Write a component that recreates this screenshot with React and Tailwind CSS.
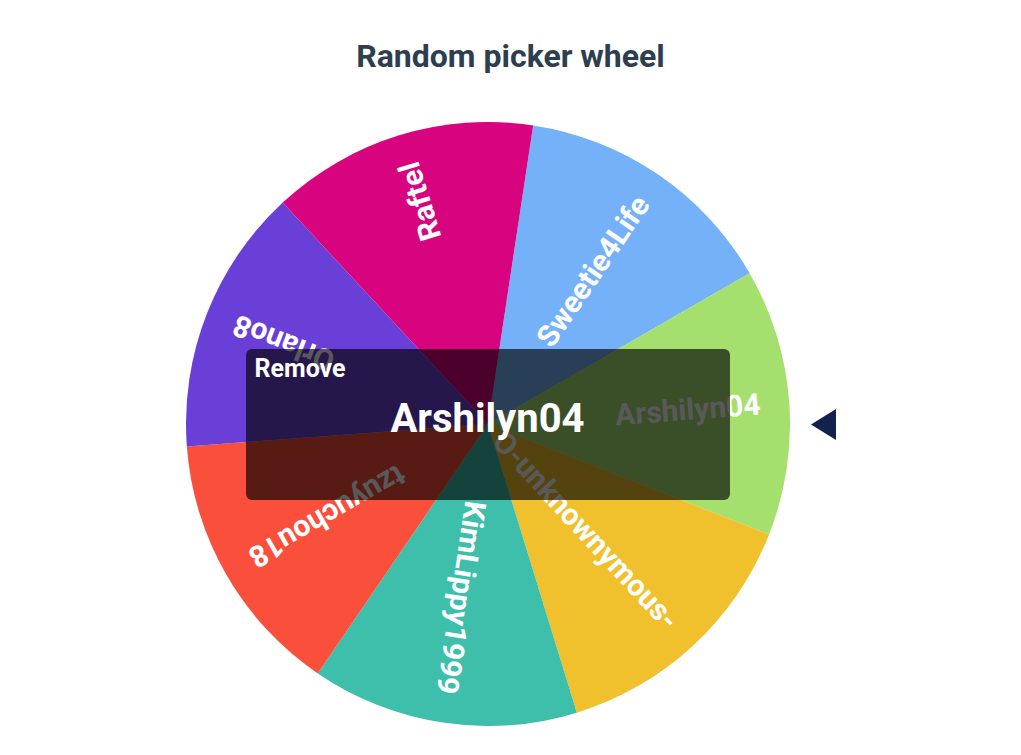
const slices = [
  { name: 'Sweetie4Life', color: '#75b1f8' },
  { name: 'Arshilyn04', color: '#a5e06f' },
  { name: 'O-unknownymous-', color: '#f0c02d' },
  { name: 'KimLippy1999', color: '#3dbfab' },
  { name: 'tzuyuchou18', color: '#f94f3b' },
  { name: 'Orlano8', color: '#6a3fd7' },
  { name: 'Raftel', color: '#d8047f' },
];

const SIZE = 604;
const C = SIZE / 2;
const START = 8.6;

function point(deg, r) {
  const a = (deg * Math.PI) / 180;
  return [C + r * Math.sin(a), C - r * Math.cos(a)];
}

function Wheel() {
  const step = 360 / slices.length;
  return (
    <svg width={SIZE} height={SIZE} viewBox={`0 0 ${SIZE} ${SIZE}`} className="block">
      {slices.map((s, i) => {
        const a0 = START + i * step;
        const a1 = a0 + step;
        const [x0, y0] = point(a0, C);
        const [x1, y1] = point(a1, C);
        return (
          <path
            key={s.name}
            d={`M ${C} ${C} L ${x0} ${y0} A ${C} ${C} 0 0 1 ${x1} ${y1} Z`}
            fill={s.color}
          />
        );
      })}
      {slices.map((s, i) => {
        const mid = START + i * step + step / 2;
        return (
          <text
            key={s.name + '-label'}
            x={C + 273}
            y={C}
            dy="0.36em"
            textAnchor="end"
            transform={`rotate(${mid - 90} ${C} ${C})`}
            fill="#ffffff"
            fontFamily="Roboto, 'Liberation Sans', sans-serif"
            fontWeight="700"
            fontSize="30"
          >
            {s.name}
          </text>
        );
      })}
    </svg>
  );
}

export default function App() {
  return (
    <div className="min-h-screen bg-white font-['Roboto','Liberation_Sans',sans-serif]">
      <h1 className="pt-[37px] text-center text-[32px] font-bold leading-[38px] text-[#2c3e50]">
        Random picker wheel
      </h1>
      <div className="mt-[47px] flex items-center justify-center gap-[21px]">
        <div className="relative">
          <Wheel />
          <div className="absolute inset-0 flex items-center justify-center">
            <div className="relative h-[151px] w-[484px] rounded-md bg-black/65">
              <div className="px-[9px] pt-[5px] text-[25px] font-bold leading-[30px] text-white">
                Remove
              </div>
              <div className="absolute inset-0 flex items-center justify-center pb-[10px] text-[40px] font-bold text-white">
                Arshilyn04
              </div>
            </div>
          </div>
        </div>
        <svg width="25" height="31" viewBox="0 0 25 31" className="block">
          <polygon points="0,15.5 25,0 25,31" fill="#13214f" />
        </svg>
      </div>
    </div>
  );
}
